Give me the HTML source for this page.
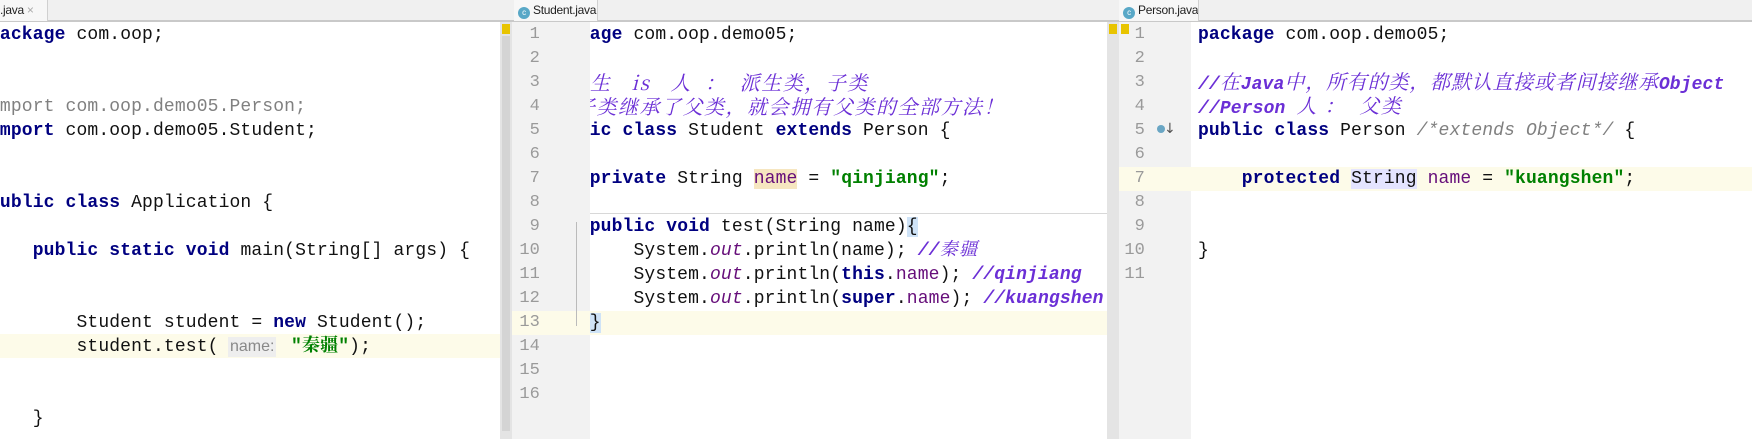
<!DOCTYPE html>
<html><head><meta charset="utf-8"><style>
*{margin:0;padding:0;box-sizing:border-box}
body{width:1752px;height:439px;overflow:hidden;background:#fff;position:relative;font-family:"Liberation Mono",monospace;font-size:18px;letter-spacing:0.13px;color:#111}
.abs{position:absolute}
.tabbar{position:absolute;left:0;top:0;width:1752px;height:22px;background:#f0f0f0;border-bottom:2px solid #c9c9c9}
.tab{position:absolute;top:0;height:21px;background:#f7f7f7;border-right:1px solid #d0d0d0;font-family:"Liberation Sans",sans-serif;font-size:12px;letter-spacing:-0.3px;line-height:21px;color:#222;padding-left:4px;white-space:nowrap;overflow:hidden}
.tab .x{color:#aaa;margin-left:3px}
.ci{display:inline-block;width:12px;height:12px;border-radius:50%;background:#59a8c7;color:#fff;font-size:8px;line-height:12px;text-align:center;vertical-align:-1px;margin-right:3px}
.clip{position:absolute;top:22px;height:417px;overflow:hidden}
.ln{position:absolute;left:0;right:0;height:24px;line-height:24px;white-space:pre}
.cur{background:#fdfbe9}
.k{color:#000080;font-weight:bold}
.s{color:#008000;font-weight:bold}
.f{color:#660e7a}
.o{color:#660e7a;font-style:italic}
.g{color:#808080}
.ci2{color:#808080;font-style:italic}
.cm{color:#6b2fd6;font-style:italic;font-weight:bold}
.cj{font-family:"Noto Serif CJK SC",serif;font-style:italic;color:#6b2fd6;font-size:20px;letter-spacing:1.5px;line-height:1}
.gut{position:absolute;top:22px;height:417px;background:#f2f2f2}
.num{position:absolute;width:40px;text-align:right;height:24px;line-height:24px;color:#9a9a9a;font-size:17px}
.sb{position:absolute;top:22px;height:417px;width:12px;background:#e4e4e4}
</style></head><body>

<div class="tabbar"></div>
<div class="tab" style="left:0;width:48px;padding-left:0">.java<span class="x">×</span></div>
<div class="tab" style="left:514px;width:84px"><span class="ci">c</span>Student.java<span class="x">×</span></div>
<div class="tab" style="left:1119px;width:80px"><span class="ci">c</span>Person.java<span class="x">×</span></div>

<!-- LEFT PANEL -->
<div class="clip" style="left:0;width:500px">
 <div class="ln cur" style="top:312px"></div>
 <div class="abs" style="left:-11px;top:0;width:520px;height:417px">
  <div class="ln" style="top:1px"><span class="k">package</span> com.oop;</div>
  <div class="ln g" style="top:73px">import com.oop.demo05.Person;</div>
  <div class="ln" style="top:97px"><span class="k">import</span> com.oop.demo05.Student;</div>
  <div class="ln" style="top:169px"><span class="k">public class</span> Application {</div>
  <div class="ln" style="top:217px">    <span class="k">public static void</span> main(String[] args) {</div>
  <div class="ln" style="top:289px">        Student student = <span class="k">new</span> Student();</div>
  <div class="ln" style="top:313px">        student.test(</div>
  <div class="ln" style="top:385px">    }</div>
 </div>
 <div class="abs" style="left:228px;top:315px;height:20px;line-height:20px;background:#eeeeee;color:#888;font-family:'Liberation Sans',sans-serif;font-size:16px;letter-spacing:0;padding:0 2px">name:</div>
 <div class="abs" style="left:291px;top:313px;height:24px;line-height:24px;white-space:pre"><span class="s">"<span style="font-family:'Noto Serif CJK SC',serif;line-height:1">秦疆</span>"</span>);</div>
</div>
<div class="sb" style="left:500px"></div>
<div class="abs" style="left:502px;top:24px;width:8px;height:10px;background:#e8c400"></div>
<div class="abs" style="left:502px;top:36px;width:8px;height:395px;background:#d4d4d4"></div>

<!-- STUDENT PANEL -->
<div class="gut" style="left:512px;width:78px"></div>
<div class="ln cur abs" style="left:512px;width:595px;top:311px"></div>
<div class="abs" style="left:500px;top:0">
 <div class="num" style="left:0;top:23px">1</div><div class="num" style="left:0;top:47px">2</div><div class="num" style="left:0;top:71px">3</div><div class="num" style="left:0;top:95px">4</div><div class="num" style="left:0;top:119px">5</div><div class="num" style="left:0;top:143px">6</div><div class="num" style="left:0;top:167px">7</div><div class="num" style="left:0;top:191px">8</div><div class="num" style="left:0;top:215px">9</div><div class="num" style="left:0;top:239px">10</div><div class="num" style="left:0;top:263px">11</div><div class="num" style="left:0;top:287px">12</div><div class="num" style="left:0;top:311px">13</div><div class="num" style="left:0;top:335px">14</div><div class="num" style="left:0;top:359px">15</div><div class="num" style="left:0;top:383px">16</div>
</div>
<div class="abs" style="left:576px;top:222px;width:1px;height:104px;background:#bbb"></div>
<div class="clip" style="left:590px;width:517px">
 <div class="abs" style="left:0;right:0;top:191px;height:1px;background:#d8d8d8"></div>
 <div class="abs" style="left:-44px;top:0;width:600px;height:417px">
  <div class="ln" style="top:1px"><span class="k">package</span> com.oop.demo05;</div>
  <div class="ln" style="top:97px"><span class="k">public class</span> Student <span class="k">extends</span> Person {</div>
  <div class="ln" style="top:145px">    <span class="k">private</span> String <span class="f" style="background:#f6e6c0">name</span> = <span class="s">"qinjiang"</span>;</div>
  <div class="ln" style="top:193px">    <span class="k">public void</span> test(String name)<span style="background:#cfe3f7">{</span></div>
  <div class="ln" style="top:217px">        System.<span class="o">out</span>.println(name); <span class="cm">//<span class="cj" style="font-weight:normal;font-size:18px">秦疆</span></span></div>
  <div class="ln" style="top:241px">        System.<span class="o">out</span>.println(<span class="k">this</span>.<span class="f">name</span>); <span class="cm">//qinjiang</span></div>
  <div class="ln" style="top:265px">        System.<span class="o">out</span>.println(<span class="k">super</span>.<span class="f">name</span>); <span class="cm">//kuangshen</span></div>
  <div class="ln" style="top:289px">    <span style="background:#cfe3f7">}</span></div>
 </div>
 <div class="abs cj" style="left:0;top:50px;white-space:pre">生   is   人  ：  派生类，子类</div>
 <div class="abs cj" style="left:-15px;top:74px;white-space:pre">子类继承了父类，就会拥有父类的全部方法！</div>
</div>
<div class="sb" style="left:1107px"></div>
<div class="abs" style="left:1109px;top:24px;width:8px;height:10px;background:#e8c400"></div>

<!-- PERSON PANEL -->
<div class="gut" style="left:1119px;width:72px"></div>
<div class="ln cur abs" style="left:1119px;width:633px;top:167px"></div>
<div class="abs" style="left:1105px;top:0">
 <div class="num" style="left:0;top:23px">1</div><div class="num" style="left:0;top:47px">2</div><div class="num" style="left:0;top:71px">3</div><div class="num" style="left:0;top:95px">4</div><div class="num" style="left:0;top:119px">5</div><div class="num" style="left:0;top:143px">6</div><div class="num" style="left:0;top:167px">7</div><div class="num" style="left:0;top:191px">8</div><div class="num" style="left:0;top:215px">9</div><div class="num" style="left:0;top:239px">10</div><div class="num" style="left:0;top:263px">11</div>
</div>
<div class="abs" style="left:1157px;top:125px;width:8px;height:8px;border-radius:50%;background:#6aa6c4"></div>
<div class="abs" style="left:1164px;top:121px;font-size:14px;color:#555;font-family:'DejaVu Sans',sans-serif">↓</div>
<div class="clip" style="left:1191px;width:561px">
 <div class="abs" style="left:7px;top:0;width:560px;height:417px">
  <div class="ln" style="top:1px"><span class="k">package</span> com.oop.demo05;</div>
  <div class="ln" style="top:49px"><span class="cm">//<span class="cj" style="font-weight:normal;letter-spacing:0.8px">在</span>Java<span class="cj" style="font-weight:normal;letter-spacing:0.8px">中，所有的类，都默认直接或者间接继承</span>Object</span></div>
  <div class="ln" style="top:73px"><span class="cm">//Person <span class="cj" style="font-weight:normal">人 ：  父类</span></span></div>
  <div class="ln" style="top:97px"><span class="k">public class</span> Person <span class="ci2">/*extends Object*/</span> {</div>
  <div class="ln" style="top:145px">    <span class="k">protected</span> <span style="background:#e4e4ff">String</span> <span class="f">name</span> = <span class="s">"kuangshen"</span>;</div>
  <div class="ln" style="top:217px">}</div>
 </div>
</div>
<div class="abs" style="left:1121px;top:24px;width:8px;height:10px;background:#e8c400"></div>
</body></html>
